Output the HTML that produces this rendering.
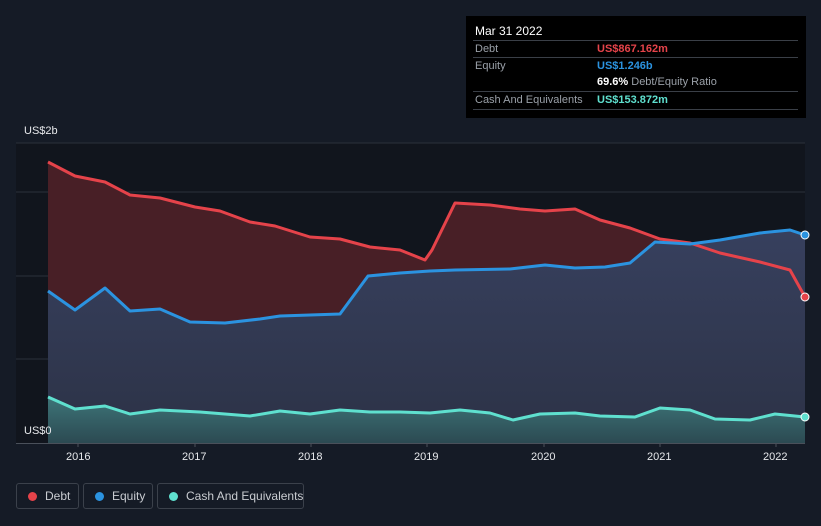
<!DOCTYPE html>
<html><head><style>
body{margin:0;width:821px;height:526px;background:#151b26;font-family:"Liberation Sans",sans-serif;overflow:hidden;position:relative}
.tt{position:absolute;left:466px;top:16px;width:340px;height:102px;background:#000;color:#fff;font-size:11px}
.tt .h{position:absolute;left:9px;top:8px;font-size:12px}
.row{position:absolute;left:7px;width:325px;height:17px;border-top:1px solid #3a3f47;color:#9aa0a8}
.row span{position:absolute;left:124px;top:2px;font-weight:bold}
.row b{position:absolute;left:0;top:2px;font-weight:normal;padding-left:2px}
.lg{position:absolute;top:483px;height:26px;border:1px solid #3b414b;border-radius:3px;color:#c9ccd1;font-size:12px;box-sizing:border-box;white-space:nowrap}
.lg i{position:absolute;left:11px;top:8px;width:9px;height:9px;border-radius:50%}
.lg em{font-style:normal;position:absolute;left:28px;top:5px}
.ax{position:absolute;top:451px;color:#e6e8eb;font-size:11px}
</style></head><body>
<svg width="821" height="526" style="position:absolute;left:0;top:0">
<defs>
<linearGradient id="eq" x1="0" y1="0" x2="0" y2="1"><stop offset="0" stop-color="#37405e"/><stop offset="1" stop-color="#2c3246"/></linearGradient>
<linearGradient id="ca" x1="0" y1="0" x2="0" y2="1"><stop offset="0" stop-color="#3d7478"/><stop offset="1" stop-color="#2c4a52"/></linearGradient>
</defs>
<rect x="16" y="143" width="789" height="300" fill="#11151d"/>
<line x1="16" y1="143" x2="805" y2="143" stroke="#2b313b"/>
<line x1="16" y1="192" x2="805" y2="192" stroke="#2b313b"/>
<line x1="16" y1="276" x2="805" y2="276" stroke="#2b313b"/>
<line x1="16" y1="359" x2="805" y2="359" stroke="#2b313b"/>
<path d="M48,162 L75,176 105,182 130,195 160,198 195,207 220,211 250,222 275,226 310,237 340,239 370,247 400,250 425,260 432,250 455,203 490,205 520,209 545,211 575,209 600,220 630,228 660,239 690,243 720,253 760,262 790,270 805,297 L805,443 48,443Z" fill="#481f26"/>
<path d="M48,291 L75,310 105,288 130,311 160,309 190,322 225,323 260,319 280,316 340,314 368,276 400,273 430,271 455,270 510,269 545,265 575,268 605,267 630,263 655,242 690,244 720,240 760,233 790,230 805,235 L805,443 48,443Z" fill="url(#eq)"/>
<path d="M48,397 L75,409 105,406 130,414 160,410 200,412 250,416 280,411 310,414 340,410 370,412 400,412 430,413 460,410 490,413 513,420 540,414 575,413 600,416 635,417 660,408 690,410 715,419 750,420 775,414 805,417 L805,443 48,443Z" fill="url(#ca)"/>
<path d="M48,162 L75,176 105,182 130,195 160,198 195,207 220,211 250,222 275,226 310,237 340,239 370,247 400,250 425,260 432,250 455,203 490,205 520,209 545,211 575,209 600,220 630,228 660,239 690,243 720,253 760,262 790,270 805,297" fill="none" stroke="#e5434a" stroke-width="3" stroke-linejoin="round"/>
<path d="M48,291 L75,310 105,288 130,311 160,309 190,322 225,323 260,319 280,316 340,314 368,276 400,273 430,271 455,270 510,269 545,265 575,268 605,267 630,263 655,242 690,244 720,240 760,233 790,230 805,235" fill="none" stroke="#2b93e0" stroke-width="3" stroke-linejoin="round"/>
<path d="M48,397 L75,409 105,406 130,414 160,410 200,412 250,416 280,411 310,414 340,410 370,412 400,412 430,413 460,410 490,413 513,420 540,414 575,413 600,416 635,417 660,408 690,410 715,419 750,420 775,414 805,417" fill="none" stroke="#5fe0cf" stroke-width="3" stroke-linejoin="round"/>
<circle cx="805" cy="297" r="4" fill="#e5434a" stroke="#fff" stroke-width="1"/>
<circle cx="805" cy="235" r="4" fill="#2b93e0" stroke="#fff" stroke-width="1"/>
<circle cx="805" cy="417" r="4" fill="#5fe0cf" stroke="#fff" stroke-width="1"/>
<line x1="16" y1="443.5" x2="805" y2="443.5" stroke="#4a505a"/>
<g stroke="#4a505a"><line x1="78" y1="443" x2="78" y2="447"/><line x1="195" y1="443" x2="195" y2="447"/><line x1="311" y1="443" x2="311" y2="447"/><line x1="427" y1="443" x2="427" y2="447"/><line x1="544" y1="443" x2="544" y2="447"/><line x1="660" y1="443" x2="660" y2="447"/><line x1="776" y1="443" x2="776" y2="447"/></g>
</svg>
<div style="position:absolute;left:24px;top:125px;color:#e6e8eb;font-size:11px">US$2b</div>
<div style="position:absolute;left:24px;top:425px;color:#e6e8eb;font-size:11px">US$0</div>
<div class="ax" style="left:66px">2016</div><div class="ax" style="left:182px">2017</div><div class="ax" style="left:298px">2018</div><div class="ax" style="left:414px">2019</div><div class="ax" style="left:531px">2020</div><div class="ax" style="left:647px">2021</div><div class="ax" style="left:763px">2022</div>
<div class="tt"><div class="h">Mar 31 2022</div>
<div class="row" style="top:24px"><b>Debt</b><span style="color:#e5434a">US$867.162m</span></div>
<div class="row" style="top:41px"><b>Equity</b><span style="color:#2b93e0">US$1.246b</span></div>
<div class="row" style="top:58px;border-top:none"><span style="color:#fff">69.6% <span style="position:static;color:#9aa0a8;font-weight:normal">Debt/Equity Ratio</span></span></div>
<div class="row" style="top:75px;border-bottom:1px solid #3a3f47"><b>Cash And Equivalents</b><span style="color:#5fe0cf">US$153.872m</span></div>
</div>
<div class="lg" style="left:16px;width:63px"><i style="background:#e5434a"></i><em>Debt</em></div>
<div class="lg" style="left:83px;width:70px"><i style="background:#2b93e0"></i><em>Equity</em></div>
<div class="lg" style="left:157px;width:147px"><i style="background:#5fe0cf"></i><em>Cash And Equivalents</em></div>
</body></html>
